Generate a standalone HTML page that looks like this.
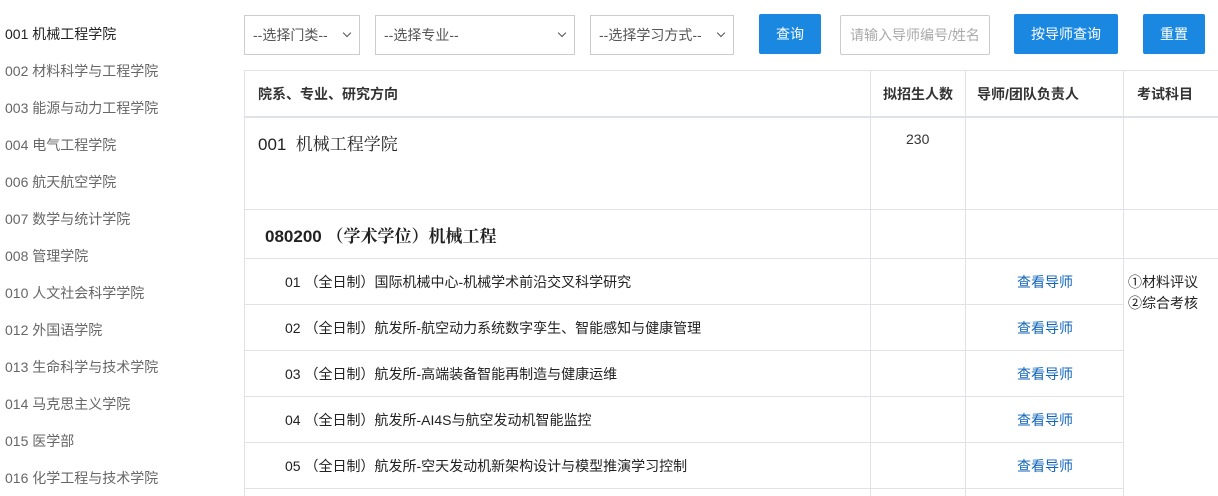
<!DOCTYPE html>
<html><head><meta charset="utf-8"><style>
*{margin:0;padding:0;box-sizing:border-box}
body{width:1218px;height:496px;overflow:hidden;background:#fff;font-family:"Liberation Sans","Noto Sans CJK SC",sans-serif;font-size:14px;color:#333;position:relative}
.side div{position:absolute;left:5px;font-size:14px;color:#666}
.sel{position:absolute;top:15px;height:40px;border:1px solid #ccc;color:#555;font-size:14px;line-height:38px;padding-left:8px}
.sel:after{content:"";position:absolute;right:9px;top:14px;width:5px;height:5px;border-right:1.3px solid #555;border-bottom:1.3px solid #555;transform:rotate(45deg)}
.btn{position:absolute;top:14px;height:40px;background:#1a88e0;color:#fff;text-align:center;line-height:40px;font-size:14px;border-radius:2px}
.inp{position:absolute;top:15px;left:840px;width:150px;height:40px;border:1px solid #ccc;color:#aaa;line-height:38px;padding-left:9px;overflow:hidden;white-space:nowrap;border-radius:2px}
.h{position:absolute;background:#dfe2e6;height:1px}
.v{position:absolute;background:#dfe2e6;width:1px}
.t{position:absolute;white-space:nowrap}
.th{font-weight:bold;color:#333;font-size:14px}
.lk{color:#1166bb}
</style></head><body>
<div class="side">
<div style="top:24px;color:#222">001 机械工程学院</div>
<div style="top:61px">002 材料科学与工程学院</div>
<div style="top:98px">003 能源与动力工程学院</div>
<div style="top:135px">004 电气工程学院</div>
<div style="top:172px">006 航天航空学院</div>
<div style="top:209px">007 数学与统计学院</div>
<div style="top:246px">008 管理学院</div>
<div style="top:283px">010 人文社会科学学院</div>
<div style="top:320px">012 外国语学院</div>
<div style="top:357px">013 生命科学与技术学院</div>
<div style="top:394px">014 马克思主义学院</div>
<div style="top:431px">015 医学部</div>
<div style="top:468px">016 化学工程与技术学院</div>
</div>
<div class="sel" style="left:244px;width:116px">--选择门类--</div>
<div class="sel" style="left:375px;width:200px">--选择专业--</div>
<div class="sel" style="left:590px;width:144px">--选择学习方式--</div>
<div class="btn" style="left:759px;width:62px">查询</div>
<div class="inp">请输入导师编号/姓名</div>
<div class="btn" style="left:1014px;width:104px">按导师查询</div>
<div class="btn" style="left:1143px;width:62px">重置</div>

<div class="h" style="left:244px;width:974px;top:70px"></div>
<div class="h" style="left:244px;width:974px;top:116px;height:2px"></div>
<div class="h" style="left:244px;width:974px;top:209px"></div>
<div class="h" style="left:244px;width:974px;top:258px"></div>
<div class="h" style="left:244px;width:879px;top:304px"></div>
<div class="h" style="left:244px;width:879px;top:350px"></div>
<div class="h" style="left:244px;width:879px;top:396px"></div>
<div class="h" style="left:244px;width:879px;top:442px"></div>
<div class="h" style="left:244px;width:879px;top:488px"></div>
<div class="v" style="left:244px;top:70px;height:426px"></div>
<div class="v" style="left:870px;top:70px;height:426px"></div>
<div class="v" style="left:965px;top:70px;height:426px"></div>
<div class="v" style="left:1123px;top:70px;height:426px"></div>

<div class="t th" style="left:258px;top:84px">院系、专业、研究方向</div>
<div class="t th" style="left:883px;top:84px">拟招生人数</div>
<div class="t th" style="left:977px;top:84px">导师/团队负责人</div>
<div class="t th" style="left:1137px;top:84px">考试科目</div>

<div class="t" style="left:258px;top:130px;font-size:17px;font-family:'Liberation Sans','Noto Serif CJK SC',serif;color:#222">001&nbsp; 机械工程学院</div>
<div class="t" style="left:906px;top:131px">230</div>
<div class="t" style="left:265px;top:222px;font-size:17px;font-weight:bold;font-family:'Liberation Sans','Noto Serif CJK SC',serif;color:#222">080200 （学术学位）机械工程</div>

<div class="t" style="left:285px;top:272px;color:#222">01 （全日制）国际机械中心-机械学术前沿交叉科学研究</div>
<div class="t" style="left:285px;top:318px;color:#222">02 （全日制）航发所-航空动力系统数字孪生、智能感知与健康管理</div>
<div class="t" style="left:285px;top:364px;color:#222">03 （全日制）航发所-高端装备智能再制造与健康运维</div>
<div class="t" style="left:285px;top:410px;color:#222">04 （全日制）航发所-AI4S与航空发动机智能监控</div>
<div class="t" style="left:285px;top:456px;color:#222">05 （全日制）航发所-空天发动机新架构设计与模型推演学习控制</div>
<div class="t lk" style="left:1017px;top:272px">查看导师</div>
<div class="t lk" style="left:1017px;top:318px">查看导师</div>
<div class="t lk" style="left:1017px;top:364px">查看导师</div>
<div class="t lk" style="left:1017px;top:410px">查看导师</div>
<div class="t lk" style="left:1017px;top:456px">查看导师</div>
<div class="t" style="left:1128px;top:272px;color:#222">①材料评议</div>
<div class="t" style="left:1128px;top:293px;color:#222">②综合考核</div>
</body></html>
